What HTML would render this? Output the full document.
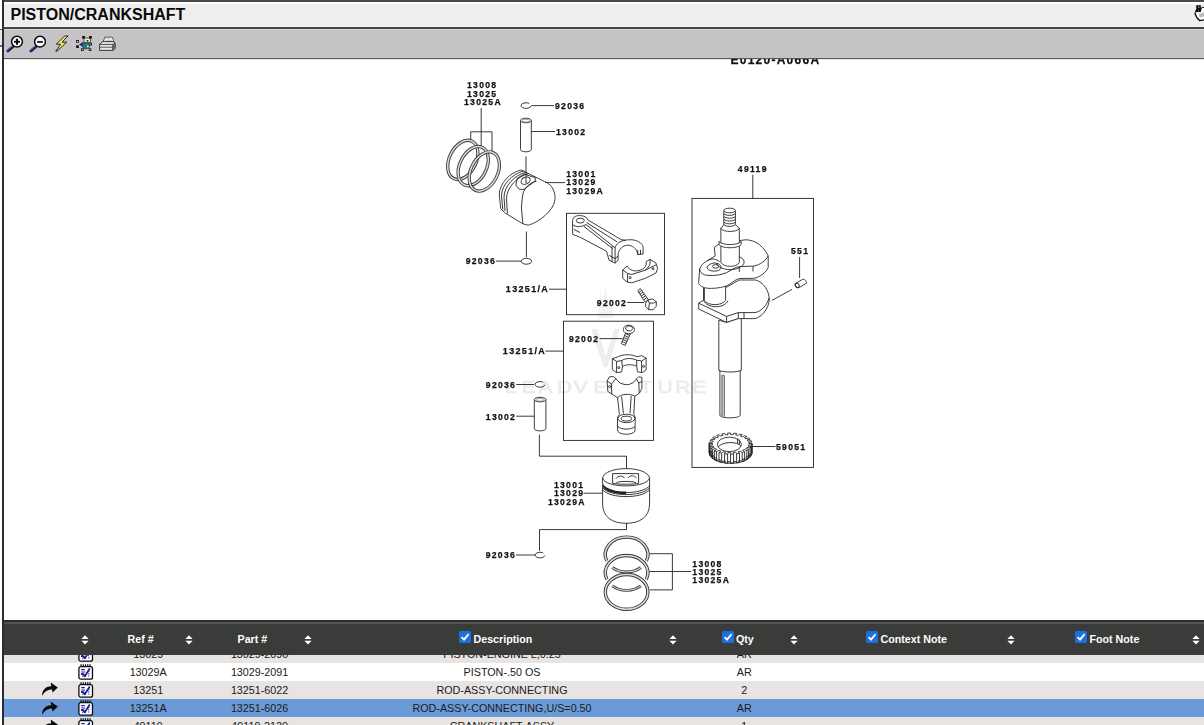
<!DOCTYPE html>
<html><head><meta charset="utf-8">
<style>
html,body{margin:0;padding:0;}
body{width:1204px;height:725px;overflow:hidden;background:#fff;position:relative;font-family:"Liberation Sans",sans-serif;}
.abs{position:absolute;}
#vline{left:2px;top:0;width:2px;height:725px;background:#2c2c2e;}
#topline{left:2px;top:0;width:1202px;height:2px;background:#4a4a4f;}
#titleband{left:4px;top:2px;width:1200px;height:25px;background:#eeeeee;border-top:2px solid #fbfbfb;border-bottom:1px solid #f8f8f8;box-sizing:border-box;}
#title{left:10.5px;top:5px;font-size:16px;font-weight:bold;color:#0a0a0a;line-height:20px;white-space:nowrap;}
#line2{left:2px;top:27px;width:1202px;height:2px;background:#454549;}
#toolbar{left:4px;top:29px;width:1200px;height:29px;background:#c5c3c5;border-top:1px solid #d9d7d9;box-sizing:border-box;}
#line3{left:2px;top:58px;width:1202px;height:1px;background:#58585c;}
#line3b{left:4px;top:59px;width:1200px;height:1px;background:#e6e6e8;}
#ltick1{left:0;top:29px;width:2px;height:1px;background:#555;}
#ltick2{left:0;top:45px;width:2px;height:2px;background:#666;}
#lstrip{left:0;top:30px;width:2px;height:15px;background:#ebe6e4;}
#thead{left:4px;top:620px;width:1200px;height:35px;background:#3a3c39;}
#theadtop{left:4px;top:620px;width:1200px;height:2px;background:#2b2e2f;}
#theadtop2{left:4px;top:622px;width:1200px;height:2px;background:#505456;}
.row{left:4px;width:1200px;height:18px;}
.hd{color:#fff;font-size:10.7px;font-weight:bold;top:633px;line-height:12px;white-space:nowrap;}
.cell{font-size:10.75px;color:#1a1a1a;line-height:12px;white-space:nowrap;text-align:center;width:200px;}
.cb{width:12px;height:12px;background:#1a73e8;border-radius:2px;top:631px;}
</style></head><body>
<div class="abs" id="titleband"></div>
<div class="abs" id="toolbar"></div>
<div class="abs" id="topline"></div>
<div class="abs" id="line2"></div>
<div class="abs" id="line3"></div>
<div class="abs" id="line3b"></div>
<div class="abs" id="lstrip"></div>
<div class="abs" id="ltick1"></div>
<div class="abs" id="ltick2"></div>
<svg class="abs" style="left:1190px;top:3px;" width="14" height="20" viewBox="1190 3 14 20">
<path d="M1195 13 L1199.6 20.4 L1204 19.8 V8 L1201 8 Z" fill="#fff"/>
<path d="M1198.5 14 l5.5 -1.5 v4 l-4 1 z" fill="#bbb"/>
<path d="M1194.8 12.6 C1195.6 16 1197.6 19 1199.8 20.6 L1204 19.9" fill="none" stroke="#0a0a0a" stroke-width="1.3"/>
<path d="M1196.2 5.2 h4.6 v2.2 l1 0.6 l-1 4 h-3.6 l-1.6 0.8 l-0.6 -1.2 l1.2 -2.4 z" fill="#0a0a12"/>
<path d="M1201.6 7.4 H1204" stroke="#0a0a0a" stroke-width="0.9"/>
<rect x="1198" y="6.6" width="1.4" height="1.2" fill="#9ab"/><rect x="1198" y="10" width="1.2" height="1.2" fill="#456"/>
</svg>
<div class="abs" id="title">PISTON/CRANKSHAFT</div>


<svg class="abs" style="left:4px;top:33px;" width="116" height="22" viewBox="4 33 116 22">
<!-- zoom in -->
<path d="M13.2 46.4 L7.9 50.9" stroke="#16224e" stroke-width="2.9" stroke-linecap="round"/>
<path d="M12.2 46 L7.2 50.2" stroke="#5b84c6" stroke-width="1" stroke-linecap="round"/>
<circle cx="17" cy="41.7" r="5.4" fill="#fff" stroke="#0c0c0c" stroke-width="1.5"/>
<path d="M14 41.7h6M17 38.7v6" stroke="#0c0c0c" stroke-width="2"/>
<!-- zoom out -->
<path d="M36.2 46.4 L30.9 50.9" stroke="#16224e" stroke-width="2.9" stroke-linecap="round"/>
<path d="M35.2 46 L30.2 50.2" stroke="#5b84c6" stroke-width="1" stroke-linecap="round"/>
<circle cx="40" cy="41.7" r="5.4" fill="#fff" stroke="#0c0c0c" stroke-width="1.5"/>
<path d="M37.2 41.9h5.6" stroke="#1a1a1a" stroke-width="1.9"/>
<!-- lightning -->
<path d="M68 35.8 L64.4 36.2 L56.4 44.2 L60.6 44.2 L55.8 51.2 L57 51.2 L66.6 42.2 L62 42.2 Z" fill="#f3ec6a" stroke="#111" stroke-width="0.9" stroke-linejoin="round"/>
<!-- select icon -->
<rect x="84" y="38" width="6.4" height="4.6" fill="#eeeeb4" stroke="#222" stroke-width="0.7"/>
<path d="M79 44.6 L83.4 41.8 L84 47.4 Z" fill="#1e2a80"/>
<ellipse cx="86" cy="45.8" rx="3.6" ry="3.3" fill="#237e84" stroke="#1a3a40" stroke-width="0.6"/>
<rect x="86.6" y="40" width="1.8" height="1.6" fill="#333"/>
<rect x="87" y="45.6" width="1.6" height="1.6" fill="#dfe"/>
<g fill="#f4f4f4" stroke="#0a0a0a" stroke-width="0.8"><rect x="82.6" y="36.4" width="1.8" height="1.9"/><rect x="89.6" y="36.4" width="1.8" height="1.9"/><rect x="76.6" y="40.5" width="1.8" height="1.9"/><rect x="76.6" y="45.7" width="1.8" height="1.9"/><rect x="81.5" y="48.7" width="1.8" height="1.9"/><rect x="89.1" y="48.7" width="1.8" height="1.9"/><rect x="89.9" y="43.2" width="1.7" height="1.8"/></g>
<!-- printer -->
<path d="M103 42 L105 37.2 L112.4 37.2 L114 42 Z" fill="#fff" stroke="#333" stroke-width="0.8"/>
<path d="M105.5 39h6M105 40.6h7" stroke="#aaa" stroke-width="0.7"/>
<path d="M99.6 44.4 L102.6 41.6 L113.6 41.6 L115.2 43.6 L115.2 48.4 L112.8 50.4 L99.6 50.4 Z" fill="#e8e8e8" stroke="#222" stroke-width="0.9"/>
<path d="M99.6 44.4 L112.6 44.4 L115.2 43 M112.6 44.4 V50.4" stroke="#222" stroke-width="0.8" fill="none"/>
<path d="M100 47.2h12.4" stroke="#555" stroke-width="1"/>
<path d="M112.8 44.4 L115.2 43.2 V48.4 L112.8 50.4 Z" fill="#666"/>
</svg>

<svg class="abs" style="left:430px;top:59px;filter:blur(0.35px);" width="420" height="561" viewBox="430 59 420 561" font-family="Liberation Sans, sans-serif">
<defs><style>
.t{font-weight:bold;font-size:8.6px;letter-spacing:1.3px;fill:#111;stroke:#111;stroke-width:0.25px;}
.l{stroke:#222;stroke-width:0.9;fill:none;}
.p{stroke:#2a2a2a;stroke-width:0.9;fill:#fff;stroke-linejoin:round;}
.g{stroke:#777;stroke-width:0.7;fill:none;}
.wm{fill:#ececec;}
</style></defs>
<!-- watermark -->
<g class="wm" font-size="16.2" font-weight="normal" stroke="#e9e9e9" stroke-width="0.5" fill="#e9e9e9" transform="scale(1.3,1)"><text y="393.2" x="388.2 401.2 414.0 428.2 441.2 456.3 469.6 492.0 505.8 519.5 532.5">LEADVENTURE</text></g>
<path d="M591 329 h6.4 l8.4 27 l8.4 -27 h6 l-12.6 38 h-4 z" fill="#eeeeee"/>
<path d="M598 318 l2 -27 l3 14 l2.6 -21 l2.6 21 l3 -13 l2 26 z" fill="#f3f3f3"/>
<!-- header code -->
<text x="730.5" y="63.7" font-weight="bold" font-size="12px" letter-spacing="1.25" fill="#111" stroke="#111" stroke-width="0.25">E0120-A066A</text>

<!-- top rings labels -->
<text class="t" x="467" y="88">13008</text>
<text class="t" x="467" y="96.5">13025</text>
<text class="t" x="464" y="105">13025A</text>
<path class="l" d="M481.2 108 V148 M470.7 140 V131.8 H492 V151.5"/>
<g fill="none">
 <g transform="translate(462.8 159.9) rotate(-64)"><ellipse rx="20.8" ry="13.4" stroke="#3a3a3a" stroke-width="3.3"/><ellipse rx="20.8" ry="13.4" stroke="#dcdcdc" stroke-width="1.5"/></g>
 <g transform="translate(473.2 166.1) rotate(-64)"><ellipse rx="20.8" ry="13.4" stroke="#3a3a3a" stroke-width="3.3"/><ellipse rx="20.8" ry="13.4" stroke="#dcdcdc" stroke-width="1.5"/></g>
 <g transform="translate(484.3 171.5) rotate(-64)"><ellipse rx="20.8" ry="13.4" stroke="#3a3a3a" stroke-width="3.3"/><ellipse rx="20.8" ry="13.4" stroke="#dcdcdc" stroke-width="1.5"/></g>
</g>
<!-- snap ring top -->
<path class="l" d="M529.2 103.4 A5 2.8 0 1 0 531 105.8" stroke-width="1.3"/>
<path class="l" d="M531.3 105.6 H554"/>
<text class="t" x="555" y="109">92036</text>
<!-- pin top -->
<path class="p" d="M520.5 120.5 V149.5 A5.4 2.3 0 0 0 531.3 149.5 V120.5"/>
<ellipse class="p" cx="525.9" cy="120.5" rx="5.4" ry="2.3"/>
<ellipse class="g" cx="525.9" cy="120.7" rx="3.6" ry="1.4"/>
<path class="l" d="M531.3 131.5 H555"/>
<text class="t" x="556" y="134.8">13002</text>
<path class="l" d="M526 156.4 V170"/>
<!-- piston top -->
<path class="p" d="M521.4 170 C510 172 499 184 499.3 195 L500.7 208.6 L504.8 212.8 L522.8 223.8 L528.3 225.2 C540 222 553 210 554.5 201.7 C556.5 195 553 188 550.3 185.2 C548 183 546 182 544.8 181.7 Z"/>
<path class="l" d="M536.6 181 C528 183.5 523.5 189 522.5 196 L521.4 207.2 L522.8 223.8"/>
<path class="l" d="M523.5 171 C512 174 501.5 185 501.5 196 L502.8 209.5 M526 172.2 C514.5 175 504 186.5 504 197 L505 211 M528.5 173.5 C517 176.5 506.5 188 506.5 198.5 L507.4 213.5" stroke-width="0.8"/>
<path class="l" d="M515.9 185.2 L517.2 178.3 L524.1 174.1 L535.2 177.6 L535.2 181 L524.1 189.3 L519.3 189.3 Z" stroke-width="0.8"/>
<ellipse class="l" cx="525.6" cy="180.6" rx="4.8" ry="3.4" transform="rotate(-25 525.6 180.6)" stroke-width="0.8"/>
<path class="l" d="M526 170 V183"/>
<path class="l" d="M545 182.6 H565"/>
<text class="t" x="566.2" y="176.6">13001</text>
<text class="t" x="566.2" y="185">13029</text>
<text class="t" x="566.2" y="193.5">13029A</text>
<path class="l" d="M526.4 231.5 V257.3"/>
<ellipse class="l" cx="526.4" cy="261.3" rx="5.2" ry="2.9" stroke-width="1.3"/>
<path class="l" d="M496 261.1 H521"/>
<text class="t" x="465.7" y="264.4">92036</text>
<!-- box 1 -->
<rect class="l" x="566.5" y="213.3" width="98" height="101.4"/>
<text class="t" x="505.8" y="292.3" textLength="43.4" lengthAdjust="spacingAndGlyphs">13251/A</text>
<path class="l" d="M549 289.2 H566.5"/>
<text class="t" x="596.8" y="305.6">92002</text>
<path class="l" d="M627.2 302.5 H644"/>
<!-- rod 1 -->
<path class="p" d="M572.6 220.6 C572.6 216.5 577 215.3 580.5 215.6 C584.5 215.8 587.3 217.5 587.8 219.9 L621.1 239.6 C623 240 626 240.2 628.7 239.8 C633 239.3 638 240.6 640.5 243 C642.5 244.8 643.2 246.5 643.1 247.8 L643.1 254 L637.8 254.6 C637 248.5 632 245 627.5 245.2 C622.5 245.5 618.8 249.5 618.1 254 L618.1 260.4 L615.1 263.1 L609 260.1 L606.5 251.2 L580.2 237.3 L572.6 234.3 Z"/>
<ellipse class="l" cx="580.3" cy="220.6" rx="4" ry="2.4" stroke-width="0.8"/>
<path class="l" d="M572.6 224.5 C575 227 581 227.5 586 224.5 L615.1 247.9 C616 244 620 240.6 625.7 240.3 M586.5 222.5 L617 241.8 M584 226.5 L612.5 248.5 M615.1 247.9 V263.1 M612 246 V261.6 M637.8 254.6 V250 M640.5 254.3 V249.8" stroke-width="0.75"/>
<path class="l" d="M574 229.5 L580 232.5 M609 255.4 l6.1 3.2 l3 -2.6" stroke-width="0.7"/>
<!-- cap 1 -->
<path class="p" d="M622.7 269.9 L622.7 278.3 L627.2 282.1 L631.8 282.8 L645.4 278.3 L656 273 L657.6 268.4 L656 263.1 L650 259.3 L646.2 261.6 C646.8 265.5 645 268 642.4 269.2 C639.5 270.8 636 271.2 633.3 270.7 C630.4 270 628 268.2 627.2 266.1 Z"/>
<path class="l" d="M622.7 269.9 L627.6 273.6 L631.8 274.4 L645.4 270.2 L656 264.8 M627.6 273.6 V282 M650 259.3 C651 264 648.5 268 645 270" stroke-width="0.75"/>
<circle class="l" cx="630.2" cy="277.6" r="1" stroke-width="0.7"/><circle class="l" cx="653" cy="268.6" r="1" stroke-width="0.7"/>
<!-- bolt 1 -->
<path class="p" d="M637.8 290.6 L640.4 288.6 L648.4 299.8 L645 302.2 Z"/>
<path class="l" d="M638.6 292.6 l3 -2.2 M639.9 294.4 l3 -2.2 M641.2 296.2 l3 -2.2 M642.5 298 l3 -2.2 M643.8 299.8 l3 -2.2" stroke-width="0.7"/>
<path class="p" d="M645.6 303.2 L648 299.6 L652.8 299 L656.4 301.8 L656.2 306.4 L653 309.8 L648.4 309.6 L645.6 306.6 Z"/>
<path class="l" d="M648 299.6 L649.4 303.2 L653.6 303 L656.4 301.8 M649.4 303.2 L648.6 309.4" stroke-width="0.7"/>

<!-- box 2 -->
<rect class="l" x="563.5" y="321.2" width="90" height="119.2"/>
<text class="t" x="568.9" y="341.5">92002</text>
<path class="l" d="M599.5 338.6 H622.6"/>
<text class="t" x="502.8" y="354" textLength="43.4" lengthAdjust="spacingAndGlyphs">13251/A</text>
<path class="l" d="M545.5 351.1 H563.5"/>
<text class="t" x="485.8" y="387.8">92036</text>
<path class="l" d="M516.3 384.5 H534"/>
<path class="l" d="M543.2 382.2 A5 2.8 0 1 0 545 384.8" stroke-width="1.3"/>
<text class="t" x="485.8" y="419.5">13002</text>
<path class="l" d="M516.3 416.2 H534.3"/>
<path class="p" d="M534.3 399.6 V428.6 A5.8 2.3 0 0 0 545.9 428.6 V399.6"/>
<ellipse class="p" cx="540.1" cy="399.6" rx="5.8" ry="2.3"/>
<ellipse class="g" cx="540.1" cy="399.8" rx="3.8" ry="1.4"/>
<path class="l" d="M539.4 434.6 V456.2 H626.5 V479"/>
<!-- bolt 2 -->
<path class="p" d="M626.2 331.6 L630.6 333.2 L625.2 345.4 L621.2 343.6 Z"/>
<path class="l" d="M625.4 333.6 l4 1.7 M624.6 335.6 l4 1.7 M623.8 337.6 l4 1.7 M623 339.6 l4 1.7 M622.2 341.6 l4 1.7" stroke-width="0.7"/>
<path class="p" d="M623.4 329.4 C623.4 326.4 627 324.6 630.4 325.4 C634 326.2 635.2 328.8 634.2 331 C633 333.6 629 334.4 626 333.2 C624 332.4 623.2 331 623.4 329.4 Z"/>
<path class="l" d="M625.4 328.2 L628 325.8 L631.6 326.4 L633 328.6 L630.6 331 L627 330.6 Z" stroke-width="0.7"/>
<!-- cap 2 -->
<path class="p" d="M612.3 358.6 L612.3 369.6 L616.4 372.6 L621.6 372 L622.4 366.8 C624.5 364.6 631 363.8 636.8 366.2 L637.4 371.8 L642.4 372.6 L646.1 369.8 L646.1 358 L641.4 355.6 L637 356.8 C631.5 354 622.5 354 617.6 357 Z"/>
<path class="l" d="M612.3 358.6 L616.6 361.4 L621.8 360.6 C625 358 632 357.8 636.6 360.2 L641.6 361 L646.1 358 M616.6 361.4 V372.4 M641.6 361 V372.4 M621.8 360.6 L622.4 366.8 M636.6 360.2 L636.8 366.2" stroke-width="0.75"/>
<circle class="l" cx="618.8" cy="367.6" r="1" stroke-width="0.7"/><circle class="l" cx="643.6" cy="366.4" r="1" stroke-width="0.7"/>
<!-- rod 2 -->
<path class="p" d="M607.1 381 L609.4 376.8 L613.4 376.6 L616 378.6 C620.5 386.5 632 386.8 636.4 379 L638.6 376.8 L641.9 377.4 L641.9 388.4 L639.4 393.2 L634.8 396.2 L633.8 414.6 C635 416 635.4 418 635.2 420 L635 431 C633 435.2 620.5 435.4 617.7 431.2 L617.5 420 C617.4 417.6 618.2 415.6 619.4 414.6 L617.6 397.6 L612.6 394.6 L607.8 391.4 Z"/>
<ellipse class="l" cx="626.4" cy="418.4" rx="8.6" ry="4.2" stroke-width="0.8"/>
<ellipse class="l" cx="626.4" cy="418.6" rx="5.2" ry="2.4" stroke-width="0.8"/>
<path class="l" d="M607.1 381 L611.4 384 L611.8 394 M611.4 384 L616 378.6 M636.4 379 L638.8 383 L641.9 381.4 M638.8 383 L639.2 393 M621.6 396.4 L623.4 413.6 M631.2 396 L630 413.4 M617.6 397.6 C622 393.5 630 393.5 634.8 396.2 M617.9 426.4 C621 430 632 430 635 426.4" stroke-width="0.75"/>
<circle class="l" cx="609.6" cy="386.6" r="1" stroke-width="0.7"/>
<!-- box 3 -->
<text class="t" x="737.8" y="171.9">49119</text>
<path class="l" d="M752.8 174.8 V198.4"/>
<rect class="l" x="692" y="198.4" width="121.5" height="269"/>
<text class="t" x="791" y="253.9">551</text>
<path class="l" d="M799.6 257 V278"/>
<path class="p" d="M795.2 283.6 L802.6 279.4 C804.4 278.6 806.6 281 806.4 283.2 L799.2 287.6 C797 288.4 794.6 285.8 795.2 283.6 Z"/>
<ellipse class="l" cx="797.2" cy="285.4" rx="1.8" ry="2.4" transform="rotate(-30 797.2 285.4)" stroke-width="0.8"/>
<path class="l" d="M792 289.4 L772.1 300.3"/>
<!-- crank lower web -->
<path class="p" d="M703.5 287.7 L703.5 300.3 L698.7 303.2 L698.7 309 L726.7 322.5 L738.3 318.6 L755 318.6 C762 317 768 309 769.2 301 C770 291 763 282 755.7 280 L739 280 L727 287 Z"/>
<path class="l" d="M698.7 303.2 L726.6 316.4 L738.3 312.6 L755 312.6 C761 311.5 767 305.5 769 298 M726.6 316.4 V322.5 M738.3 312.6 V318.6 M744 312.6 V318.6" stroke-width="0.8"/>
<!-- crank pin -->
<path class="p" d="M704.4 286.6 V300.6 C708 306 722 306 725.6 300.4 V286"/>
<path class="l" d="M703.5 300.3 C707 308.5 724 309 728 300.8" stroke-width="0.8"/>
<!-- lower shaft -->
<path class="p" d="M718.8 320.2 V370.2 L719.9 370.6 V415.6 C722 418.6 738 418.6 740.2 415.6 V370.6 L741.3 370.2 V318.6 L738.3 318.6 L726.7 322.5 Z"/>
<path class="l" d="M718.8 370.2 C722 372.6 738 372.6 741.3 370.2 M722 375.6 V416 M724.2 375.6 V416.8 M722 375.6 C722.6 374.6 723.6 374.6 724.2 375.6" stroke-width="0.8"/>
<!-- upper web -->
<path class="p" d="M714.4 247.4 L719.6 243.6 L741.2 240.4 C751 238 762 243 768.2 255.9 L768.2 267.5 C766 272.5 760 277 753.8 278.3 L739.3 278.5 C735 279.5 731 284 726.7 285.8 C719 288.5 709 289 704.5 287.7 C700 286 698.2 284 698.7 281.9 L699.7 269 C700.5 265.5 704 262.5 707.4 260.7 L715.1 256 Z"/>
<path class="l" d="M699.7 269 C700 273 703 275 708 275.4 C716 276 722 274.5 726.6 272.6 C731 270.5 735 266.8 740.2 266.5 L753.8 266.1 C760 265 766 260.5 768.2 255.9 M739.3 267 V272 M753 266.4 V271.4" stroke-width="0.8"/>
<path class="l" d="M707.4 260.7 C713 257.5 716 259.5 719.6 261.6 M707 267 C710 262.5 716.5 262 719.5 264.5 C722.5 267 721 270.5 716 271 C711 271.5 707 270 707 267 Z" stroke-width="0.8"/>
<ellipse class="l" cx="715.6" cy="266.4" rx="3" ry="1.8" stroke-width="0.8"/>
<!-- upper journal -->
<path class="p" d="M720.9 228 V262.6 C724 267.6 736.5 267.6 739.3 262.6 V228 Z"/>
<path class="p" d="M719 241.4 C722 245.6 738 245.6 741.2 241.4 V244.6 C738 248.8 722 248.8 719 244.6 Z" stroke-width="0.8"/>
<path class="l" d="M716.5 263.5 C720 271.5 739.5 271.8 743.8 263.6 C745 259.6 742 257.6 739.3 257" stroke-width="0.8"/>
<path class="p" d="M723.8 210.5 V224.6 L720.9 228.6 C724 232.4 736.5 232.4 739.3 228.6 L735.4 224.6 V210.5"/>
<ellipse class="p" cx="729.6" cy="210.5" rx="5.8" ry="2.3"/>
<path class="l" d="M723.8 213.6 C726 216 733 216 735.4 213.6 M723.8 216.4 C726 218.8 733 218.8 735.4 216.4 M723.8 219.2 C726 221.6 733 221.6 735.4 219.2 M723.8 222 C726 224.4 733 224.4 735.4 222 M723.8 224.6 C726 227 733 227 735.4 224.6" stroke-width="0.7"/>
<!-- gear -->
<path class="p" d="M709.2 443.6 v9.2 C711.2 466.8 750.0 466.8 752.0 452.8 v-9.2 Z" stroke="none"/>
<path class="p" d="M752.0 443.6 L751.8 445.1 L748.6 444.9 L748.1 446.1 L751.1 446.6 L750.1 448.0 L747.1 447.3 L745.9 448.5 L748.6 449.3 L746.8 450.5 L744.3 449.5 L742.5 450.4 L744.6 451.6 L742.2 452.5 L740.4 451.2 L738.2 451.8 L739.5 453.2 L736.6 453.8 L735.7 452.2 L733.2 452.5 L733.6 454.1 L730.6 454.2 L730.6 452.6 L728.0 452.5 L727.6 454.1 L724.6 453.8 L725.5 452.2 L723.0 451.8 L721.7 453.2 L719.0 452.5 L720.8 451.2 L718.7 450.4 L716.6 451.6 L714.4 450.5 L716.9 449.5 L715.3 448.5 L712.6 449.3 L711.1 448.0 L714.1 447.3 L713.1 446.1 L710.1 446.6 L709.4 445.1 L712.6 444.9 L712.4 443.6 L709.2 443.6 L709.4 442.1 L712.6 442.3 L713.1 441.1 L710.1 440.6 L711.1 439.2 L714.1 439.9 L715.3 438.7 L712.6 437.9 L714.4 436.7 L716.9 437.7 L718.7 436.8 L716.6 435.6 L719.0 434.7 L720.8 436.0 L723.0 435.4 L721.7 434.0 L724.6 433.4 L725.5 435.0 L728.0 434.7 L727.6 433.1 L730.6 433.0 L730.6 434.6 L733.2 434.7 L733.6 433.1 L736.6 433.4 L735.7 435.0 L738.2 435.4 L739.5 434.0 L742.2 434.7 L740.4 436.0 L742.5 436.8 L744.6 435.6 L746.8 436.7 L744.3 437.7 L745.9 438.7 L748.6 437.9 L750.1 439.2 L747.1 439.9 L748.1 441.1 L751.1 440.6 L751.8 442.1 L748.6 442.3 L748.8 443.6 Z" stroke-width="0.95"/>
<path class="l" d="M752.0 452.8 L751.8 454.3 L748.6 454.1 L748.1 455.3 L751.1 455.8 L750.1 457.2 L747.1 456.5 L745.9 457.7 L748.6 458.5 L746.8 459.7 L744.3 458.7 L742.5 459.6 L744.6 460.8 L742.2 461.7 L740.4 460.4 L738.2 461.0 L739.5 462.4 L736.6 463.0 L735.7 461.4 L733.2 461.7 L733.6 463.3 L730.6 463.4 L730.6 461.8 L728.0 461.7 L727.6 463.3 L724.6 463.0 L725.5 461.4 L723.0 461.0 L721.7 462.4 L719.0 461.7 L720.8 460.4 L718.7 459.6 L716.6 460.8 L714.4 459.7 L716.9 458.7 L715.3 457.7 L712.6 458.5 L711.1 457.2 L714.1 456.5 L713.1 455.3 L710.1 455.8 L709.4 454.3 L712.6 454.1 L712.4 452.8 L709.2 452.8 L709.4 451.3 L712.6 451.5" stroke-width="0.95"/>
<path class="l" d="M752.0 443.6 v9.2 M751.8 445.1 v9.2 M751.1 446.6 v9.2 M750.1 448.0 v9.2 M748.6 449.3 v9.2 M746.8 450.5 v9.2 M744.6 451.6 v9.2 M742.2 452.5 v9.2 M739.5 453.2 v9.2 M736.6 453.8 v9.2 M733.6 454.1 v9.2 M730.6 454.2 v9.2 M727.6 454.1 v9.2 M724.6 453.8 v9.2 M721.7 453.2 v9.2 M719.0 452.5 v9.2 M716.6 451.6 v9.2 M714.4 450.5 v9.2 M712.6 449.3 v9.2 M711.1 448.0 v9.2 M710.1 446.6 v9.2 M709.4 445.1 v9.2 M709.2 443.6 v9.2 " stroke-width="0.95"/>
<ellipse class="p" cx="729.4" cy="444.4" rx="12" ry="7.2"/>
<path class="l" d="M718.2 447 C722 441.5 737 441 741 446 M737.6 438.6 v5 M739.4 439.6 v5" stroke-width="0.8"/>
<path class="l" d="M752 446.5 H775.5"/>
<text class="t" x="776" y="449.8">59051</text>

<!-- bottom piston -->
<path class="p" d="M602.6 478 V504 C602.8 517 612 523.3 626.1 523.3 C640 523.3 649.4 517 649.6 504 V478 C647 465.5 605 465.5 602.6 478 Z"/>
<path class="l" d="M602.6 478 C605 488.5 647 488.5 649.6 478" stroke-width="0.8"/>
<path class="l" d="M602.8 486 C607 490.5 616 492.6 626 492.6 C636 492.6 645 490.5 649.4 486 M602.8 488 C607 492.5 616 494.6 626 494.6 C636 494.6 645 492.5 649.4 488 M602.8 490 C607 494.5 616 496.6 626 496.6 C636 496.6 645 494.5 649.4 490" stroke-width="0.8"/>
<path d="M602.8 484 C607 489.5 616 491.6 626 491.6 L626 494 C616 494 607 492.5 602.8 487 Z" fill="#222"/>
<path class="l" d="M612.6 473.6 H638.6 V483.2 C634 484.6 617 484.6 612.6 483.2 Z M616 478.6 c2 -3.2 7 -3.2 8.6 -0.4 M628 478 c2 -3 6.6 -3 8.4 0.2 M616.4 482.6 c3 -1.6 16 -1.6 19.6 0" stroke-width="0.8"/>
<path class="l" d="M583.6 493.2 H602.6"/>
<text class="t" x="553.9" y="488.2">13001</text>
<text class="t" x="553.9" y="496.3">13029</text>
<text class="t" x="547.9" y="504.7">13029A</text>
<path class="l" d="M626.5 523 V529.6 H539.5 V550.8"/>
<path class="l" d="M543.2 552.9 A5 2.8 0 1 0 545 555.5" stroke-width="1.3"/>
<path class="l" d="M516 555 H535"/>
<text class="t" x="485.7" y="558.4">92036</text>
<!-- bottom rings -->
<g fill="none">
 <path d="M606.9 561.1 A21.3 17.4 0 1 1 646.3 561.1" stroke="#3a3a3a" stroke-width="3.4"/><path d="M606.9 561.1 A21.3 17.4 0 1 1 646.3 561.1" stroke="#dcdcdc" stroke-width="1.5"/>
 <path d="M612.3 567.5 A21.3 17.4 0 0 0 640.9 567.5" stroke="#3a3a3a" stroke-width="2.8"/><path d="M612.3 567.5 A21.3 17.4 0 0 0 640.9 567.5" stroke="#dcdcdc" stroke-width="1.1"/>
 <path d="M606.9 579.5 A21.3 17.4 0 1 1 646.3 579.5" stroke="#3a3a3a" stroke-width="3.4"/><path d="M606.9 579.5 A21.3 17.4 0 1 1 646.3 579.5" stroke="#dcdcdc" stroke-width="1.5"/>
 <path d="M612.3 585.9 A21.3 17.4 0 0 0 640.9 585.9" stroke="#3a3a3a" stroke-width="2.8"/><path d="M612.3 585.9 A21.3 17.4 0 0 0 640.9 585.9" stroke="#dcdcdc" stroke-width="1.1"/>
 <ellipse cx="626.6" cy="591.9" rx="21.3" ry="17.4" stroke="#3a3a3a" stroke-width="3.4"/><ellipse cx="626.6" cy="591.9" rx="21.3" ry="17.4" stroke="#dcdcdc" stroke-width="1.5"/>
</g>
<path class="l" d="M649.8 553.7 H672.4 V589.9 H649.8 M649.8 571.5 H691"/>
<text class="t" x="692.3" y="566.8">13008</text>
<text class="t" x="692.3" y="575">13025</text>
<text class="t" x="692.3" y="583.3">13025A</text>


</svg>


<!--TABLE-->
<div class="abs row" style="top:655px;height:8px;background:#e8e4e1;"></div>
<div class="abs row" style="top:663px;background:#ffffff;"></div>
<div class="abs row" style="top:681px;background:#e8e4e1;"></div>
<div class="abs row" style="top:699px;background:#6a9bd8;"></div>
<div class="abs row" style="top:717px;height:8px;background:#e8e4e1;"></div>
<div class="abs cell" style="left:48.19999999999999px;top:647.8px;">13029</div>
<div class="abs cell" style="left:159.60000000000002px;top:647.8px;">13029-2090</div>
<div class="abs cell" style="left:402px;top:647.8px;">PISTON-ENGINE L,0.25</div>
<div class="abs cell" style="left:644.3px;top:647.8px;">AR</div>
<div class="abs cell" style="left:48.19999999999999px;top:665.7px;">13029A</div>
<div class="abs cell" style="left:159.60000000000002px;top:665.7px;">13029-2091</div>
<div class="abs cell" style="left:402px;top:665.7px;">PISTON-.50 OS</div>
<div class="abs cell" style="left:644.3px;top:665.7px;">AR</div>
<div class="abs cell" style="left:48.19999999999999px;top:683.7px;">13251</div>
<div class="abs cell" style="left:159.60000000000002px;top:683.7px;">13251-6022</div>
<div class="abs cell" style="left:402px;top:683.7px;">ROD-ASSY-CONNECTING</div>
<div class="abs cell" style="left:644.3px;top:683.7px;">2</div>
<div class="abs cell" style="left:48.19999999999999px;top:701.6px;">13251A</div>
<div class="abs cell" style="left:159.60000000000002px;top:701.6px;">13251-6026</div>
<div class="abs cell" style="left:402px;top:701.6px;">ROD-ASSY-CONNECTING,U/S=0.50</div>
<div class="abs cell" style="left:644.3px;top:701.6px;">AR</div>
<div class="abs cell" style="left:48.19999999999999px;top:719.5px;">49119</div>
<div class="abs cell" style="left:159.60000000000002px;top:719.5px;">49119-2120</div>
<div class="abs cell" style="left:402px;top:719.5px;">CRANKSHAFT-ASSY</div>
<div class="abs cell" style="left:644.3px;top:719.5px;">1</div>
<svg class="abs" style="left:78px;top:646.2px;" width="16" height="16" viewBox="0 0 16 16"><rect x="0.9" y="2.7" width="13.6" height="12.5" rx="2" fill="#fff" stroke="#0c0c0c" stroke-width="1.3"/><path d="M2.4 1.1h11" stroke="#111" stroke-width="1.7" stroke-dasharray="1.25 1"/><path d="M3.2 5.6h3.6M3.2 8h4" stroke="#1c1c9c" stroke-width="1.2"/><path d="M3 10.2 L5.2 10 L6.8 12.2 L11.8 4.4" stroke="#1c1c9c" stroke-width="1.8" fill="none" stroke-linejoin="round"/><path d="M4.4 12.6l1.4-1.6M7.6 12.6l-1-1.4" stroke="#1c1c9c" stroke-width="1.1"/><path d="M9.4 7.6h2.4M10 9.8h2.2M10.2 12h1.6" stroke="#1c1c9c" stroke-width="1" stroke-dasharray="1.2 0.8"/></svg>
<svg class="abs" style="left:78px;top:664.2px;" width="16" height="16" viewBox="0 0 16 16"><rect x="0.9" y="2.7" width="13.6" height="12.5" rx="2" fill="#fff" stroke="#0c0c0c" stroke-width="1.3"/><path d="M2.4 1.1h11" stroke="#111" stroke-width="1.7" stroke-dasharray="1.25 1"/><path d="M3.2 5.6h3.6M3.2 8h4" stroke="#1c1c9c" stroke-width="1.2"/><path d="M3 10.2 L5.2 10 L6.8 12.2 L11.8 4.4" stroke="#1c1c9c" stroke-width="1.8" fill="none" stroke-linejoin="round"/><path d="M4.4 12.6l1.4-1.6M7.6 12.6l-1-1.4" stroke="#1c1c9c" stroke-width="1.1"/><path d="M9.4 7.6h2.4M10 9.8h2.2M10.2 12h1.6" stroke="#1c1c9c" stroke-width="1" stroke-dasharray="1.2 0.8"/></svg>
<svg class="abs" style="left:78px;top:682px;" width="16" height="16" viewBox="0 0 16 16"><rect x="0.9" y="2.7" width="13.6" height="12.5" rx="2" fill="#fff" stroke="#0c0c0c" stroke-width="1.3"/><path d="M2.4 1.1h11" stroke="#111" stroke-width="1.7" stroke-dasharray="1.25 1"/><path d="M3.2 5.6h3.6M3.2 8h4" stroke="#1c1c9c" stroke-width="1.2"/><path d="M3 10.2 L5.2 10 L6.8 12.2 L11.8 4.4" stroke="#1c1c9c" stroke-width="1.8" fill="none" stroke-linejoin="round"/><path d="M4.4 12.6l1.4-1.6M7.6 12.6l-1-1.4" stroke="#1c1c9c" stroke-width="1.1"/><path d="M9.4 7.6h2.4M10 9.8h2.2M10.2 12h1.6" stroke="#1c1c9c" stroke-width="1" stroke-dasharray="1.2 0.8"/></svg>
<svg class="abs" style="left:78px;top:699.9px;" width="16" height="16" viewBox="0 0 16 16"><rect x="0.9" y="2.7" width="13.6" height="12.5" rx="2" fill="#fff" stroke="#0c0c0c" stroke-width="1.3"/><path d="M2.4 1.1h11" stroke="#111" stroke-width="1.7" stroke-dasharray="1.25 1"/><path d="M3.2 5.6h3.6M3.2 8h4" stroke="#1c1c9c" stroke-width="1.2"/><path d="M3 10.2 L5.2 10 L6.8 12.2 L11.8 4.4" stroke="#1c1c9c" stroke-width="1.8" fill="none" stroke-linejoin="round"/><path d="M4.4 12.6l1.4-1.6M7.6 12.6l-1-1.4" stroke="#1c1c9c" stroke-width="1.1"/><path d="M9.4 7.6h2.4M10 9.8h2.2M10.2 12h1.6" stroke="#1c1c9c" stroke-width="1" stroke-dasharray="1.2 0.8"/></svg>
<svg class="abs" style="left:78px;top:717.7px;" width="16" height="16" viewBox="0 0 16 16"><rect x="0.9" y="2.7" width="13.6" height="12.5" rx="2" fill="#fff" stroke="#0c0c0c" stroke-width="1.3"/><path d="M2.4 1.1h11" stroke="#111" stroke-width="1.7" stroke-dasharray="1.25 1"/><path d="M3.2 5.6h3.6M3.2 8h4" stroke="#1c1c9c" stroke-width="1.2"/><path d="M3 10.2 L5.2 10 L6.8 12.2 L11.8 4.4" stroke="#1c1c9c" stroke-width="1.8" fill="none" stroke-linejoin="round"/><path d="M4.4 12.6l1.4-1.6M7.6 12.6l-1-1.4" stroke="#1c1c9c" stroke-width="1.1"/><path d="M9.4 7.6h2.4M10 9.8h2.2M10.2 12h1.6" stroke="#1c1c9c" stroke-width="1" stroke-dasharray="1.2 0.8"/></svg>
<svg class="abs" style="left:41px;top:682.2px;" width="18" height="15" viewBox="0 0 18 15"><path d="M1.3 14 C0.8 8.5 4 4.6 10.3 4.3 L9.6 0.6 L16.8 5.6 L11.6 10.6 L10.9 7.4 C6.5 7.4 3.2 9.6 1.3 14 Z" fill="#0a0a0a"/></svg>
<svg class="abs" style="left:41px;top:700.6px;" width="18" height="15" viewBox="0 0 18 15"><path d="M1.3 14 C0.8 8.5 4 4.6 10.3 4.3 L9.6 0.6 L16.8 5.6 L11.6 10.6 L10.9 7.4 C6.5 7.4 3.2 9.6 1.3 14 Z" fill="#0a0a0a"/></svg>
<svg class="abs" style="left:41px;top:718.6px;" width="18" height="15" viewBox="0 0 18 15"><path d="M1.3 14 C0.8 8.5 4 4.6 10.3 4.3 L9.6 0.6 L16.8 5.6 L11.6 10.6 L10.9 7.4 C6.5 7.4 3.2 9.6 1.3 14 Z" fill="#0a0a0a"/></svg>
<div class="abs" id="thead"></div>
<div class="abs" id="theadtop"></div>
<div class="abs" id="theadtop2"></div>
<svg class="abs" style="left:81px;top:635px;" width="8" height="10" viewBox="0 0 8 10"><path d="M0.4 4 L4 0.3 L7.6 4 Z M0.4 5.8 L7.6 5.8 L4 9.5 Z" fill="#fff"/></svg>
<svg class="abs" style="left:185.4px;top:635px;" width="8" height="10" viewBox="0 0 8 10"><path d="M0.4 4 L4 0.3 L7.6 4 Z M0.4 5.8 L7.6 5.8 L4 9.5 Z" fill="#fff"/></svg>
<svg class="abs" style="left:304.3px;top:635px;" width="8" height="10" viewBox="0 0 8 10"><path d="M0.4 4 L4 0.3 L7.6 4 Z M0.4 5.8 L7.6 5.8 L4 9.5 Z" fill="#fff"/></svg>
<svg class="abs" style="left:669px;top:635px;" width="8" height="10" viewBox="0 0 8 10"><path d="M0.4 4 L4 0.3 L7.6 4 Z M0.4 5.8 L7.6 5.8 L4 9.5 Z" fill="#fff"/></svg>
<svg class="abs" style="left:789.5px;top:635px;" width="8" height="10" viewBox="0 0 8 10"><path d="M0.4 4 L4 0.3 L7.6 4 Z M0.4 5.8 L7.6 5.8 L4 9.5 Z" fill="#fff"/></svg>
<svg class="abs" style="left:1006.7px;top:635px;" width="8" height="10" viewBox="0 0 8 10"><path d="M0.4 4 L4 0.3 L7.6 4 Z M0.4 5.8 L7.6 5.8 L4 9.5 Z" fill="#fff"/></svg>
<svg class="abs" style="left:1192px;top:635px;" width="8" height="10" viewBox="0 0 8 10"><path d="M0.4 4 L4 0.3 L7.6 4 Z M0.4 5.8 L7.6 5.8 L4 9.5 Z" fill="#fff"/></svg>
<div class="abs hd" style="left:127.5px;">Ref #</div>
<div class="abs hd" style="left:237.5px;">Part #</div>
<svg class="abs" style="left:459px;top:631px;" width="12" height="12" viewBox="0 0 12 12"><rect width="12" height="12" rx="1.5" fill="#1b6fe0"/><path d="M2.6 6.2 L5 8.6 L9.6 3.2" stroke="#fff" stroke-width="1.8" fill="none"/></svg><div class="abs hd" style="left:473.5px;">Description</div>
<svg class="abs" style="left:722px;top:631px;" width="12" height="12" viewBox="0 0 12 12"><rect width="12" height="12" rx="1.5" fill="#1b6fe0"/><path d="M2.6 6.2 L5 8.6 L9.6 3.2" stroke="#fff" stroke-width="1.8" fill="none"/></svg><div class="abs hd" style="left:736px;">Qty</div>
<svg class="abs" style="left:866px;top:631px;" width="12" height="12" viewBox="0 0 12 12"><rect width="12" height="12" rx="1.5" fill="#1b6fe0"/><path d="M2.6 6.2 L5 8.6 L9.6 3.2" stroke="#fff" stroke-width="1.8" fill="none"/></svg><div class="abs hd" style="left:880.5px;">Context Note</div>
<svg class="abs" style="left:1075px;top:631px;" width="12" height="12" viewBox="0 0 12 12"><rect width="12" height="12" rx="1.5" fill="#1b6fe0"/><path d="M2.6 6.2 L5 8.6 L9.6 3.2" stroke="#fff" stroke-width="1.8" fill="none"/></svg><div class="abs hd" style="left:1089.5px;">Foot Note</div>
<div class="abs" id="vline"></div>
</body></html>
